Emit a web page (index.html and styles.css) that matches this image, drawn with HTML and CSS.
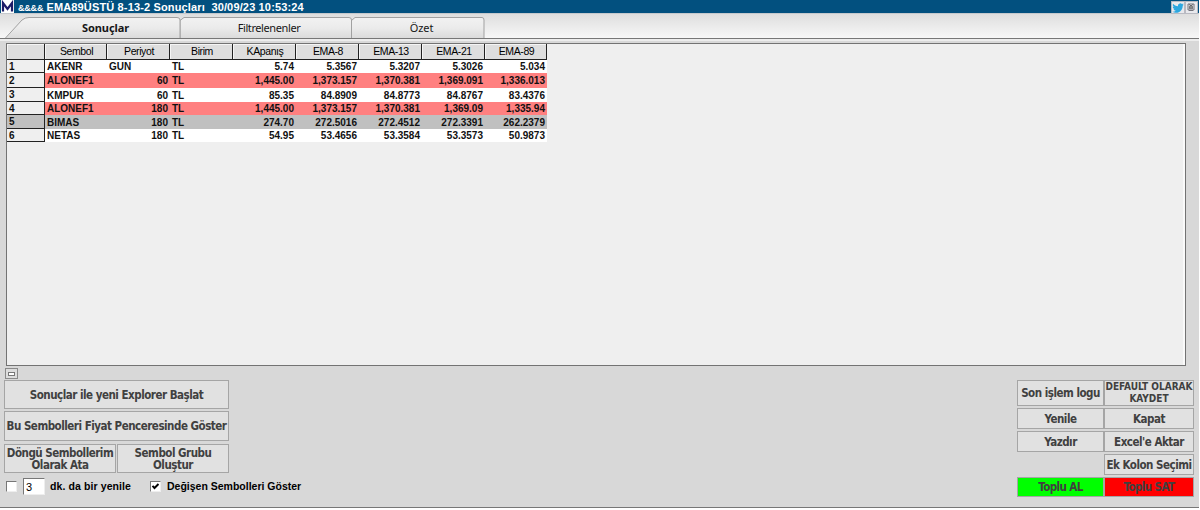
FILE: index.html
```
<!DOCTYPE html>
<html lang="tr">
<head>
<meta charset="utf-8">
<title>Sonuçlar</title>
<link rel="stylesheet" href="styles.css">
</head>
<body>
<div class="window">
  <header class="titlebar">
    <svg class="logo" viewBox="0 0 13 13"><rect width="13" height="13" fill="#fff"/><path d="M2 11.500V3L6.500 9L11 3V11.500" fill="none" stroke="#1c1b68" stroke-width="2.200"/></svg>
    <span class="title"><span class="amps">&amp;&amp;&amp;&amp;</span> EMA89ÜSTÜ 8-13-2 Sonuçları&nbsp; 30/09/23 10:53:24</span>
    <span class="winbtn bird"><svg viewBox="0 0 24 24"><path fill="#2ca7df" d="M23.6 4.900c-.8.4-1.700.6-2.700.8 1-.6 1.700-1.500 2-2.600-.9.5-1.900.9-3 1.100a4.700 4.700 0 0 0-8 4.300C8 8.300 4.500 6.400 2.200 3.600c-1.300 2.200-.7 4.900 1.400 6.300-.8 0-1.500-.2-2.100-.6 0 2.300 1.600 4.300 3.800 4.700-.7.200-1.400.2-2.100.1.600 1.900 2.300 3.200 4.400 3.300A9.500 9.500 0 0 1 .6 19.400c2.200 1.400 4.700 2.100 7.300 2.100 8.800 0 13.800-7.400 13.500-14.200.9-.6 1.700-1.500 2.200-2.400z"/></svg></span>
    <span class="winbtn close"><svg viewBox="0 0 10 10"><path d="M2 2H8V8H2ZM3 8.500H7M3 2L7 7M7 2L3 7" fill="none" stroke="#74747c" stroke-width="1"/><circle cx="5" cy="5" r="1.300" fill="#eee" stroke="#444"/></svg></span>
  </header>
  <nav class="tabs">
    <svg class="tabshapes" viewBox="0 0 490 24">
      <defs><linearGradient id="tab" x1="0" y1="0" x2="0" y2="1"><stop offset="0" stop-color="#f2f2f2"/><stop offset=".5" stop-color="#ebebeb"/><stop offset="1" stop-color="#dadada"/></linearGradient></defs>
      <path d="M351.500 24.500V6.500L355 3.500H482Q484 3.500 484 6V24.500Z"/>
      <path d="M180 24.500V6.500L184 3.500H349Q351.500 3.500 351.500 6V24.500Z"/>
      <path d="M5 24.500L22 6Q25 3.500 29 3.500H177Q180 3.500 180 6V24.500Z"/>
    </svg>
    <span class="tab t1">Sonuçlar</span><span class="tab t2">Filtrelenenler</span><span class="tab t3">Özet</span>
  </nav>
  <main class="grid">
    <div class="sheet">
    <table>
      <colgroup><col class="c0"><col class="c1"><col class="c2"><col class="c3"><col class="c4"><col class="c5"><col class="c6"><col class="c7"><col class="c8"></colgroup>
      <thead><tr><th></th><th>Sembol</th><th>Periyot</th><th>Birim</th><th>KApanış</th><th>EMA-8</th><th>EMA-13</th><th>EMA-21</th><th>EMA-89</th></tr></thead>
      <tbody>
        <tr class="r13"><th>1</th><td class="l">AKENR</td><td class="l">GUN</td><td class="l">TL</td><td>5.74</td><td>5.3567</td><td>5.3207</td><td>5.3026</td><td>5.034</td></tr>
        <tr class="red r15"><th>2</th><td class="l">ALONEF1</td><td>60</td><td class="l">TL</td><td>1,445.00</td><td>1,373.157</td><td>1,370.381</td><td>1,369.091</td><td>1,336.013</td></tr>
        <tr class="r14"><th>3</th><td class="l">KMPUR</td><td>60</td><td class="l">TL</td><td>85.35</td><td>84.8909</td><td>84.8773</td><td>84.8767</td><td>83.4376</td></tr>
        <tr class="red r13"><th>4</th><td class="l">ALONEF1</td><td>180</td><td class="l">TL</td><td>1,445.00</td><td>1,373.157</td><td>1,370.381</td><td>1,369.09</td><td>1,335.94</td></tr>
        <tr class="gray r14"><th>5</th><td class="l">BIMAS</td><td>180</td><td class="l">TL</td><td>274.70</td><td>272.5016</td><td>272.4512</td><td>272.3391</td><td>262.2379</td></tr>
        <tr class="r13"><th>6</th><td class="l">NETAS</td><td>180</td><td class="l">TL</td><td>54.95</td><td>53.4656</td><td>53.3584</td><td>53.3573</td><td>50.9873</td></tr>
      </tbody>
    </table>
    </div>
  </main>
  <footer class="footer">
    <section class="left">
      <span class="mini"><i></i></span>
      <button class="b1">Sonuçlar ile yeni Explorer Başlat</button>
      <button class="b2">Bu Sembolleri Fiyat Penceresinde Göster</button>
      <div class="pair"><button class="b3">Döngü Sembollerim<br>Olarak Ata</button><button class="b4">Sembol Grubu<br>Oluştur</button></div>
      <div class="options">
        <span class="check"></span><span class="field">3</span><span class="lab lab1">dk. da bir yenile</span>
        <span class="check"><svg viewBox="0 0 9 9"><path d="M1.500 3.800L3.500 6L7.500 2" fill="none" stroke="#000" stroke-width="1.900"/></svg></span><span class="lab lab2">Değişen Sembolleri Göster</span>
      </div>
    </section>
    <section class="right">
      <button>Son işlem logu</button><button class="small">DEFAULT OLARAK<br>KAYDET</button>
      <button>Yenile</button><button>Kapat</button>
      <button>Yazdır</button><button>Excel'e Aktar</button>
      <button class="ek">Ek Kolon Seçimi</button>
      <button class="buy">Toplu AL</button><button class="sell">Toplu SAT</button>
    </section>
  </footer>
</div>
</body>
</html>
```
FILE: styles.css
```
* { box-sizing: border-box; }
body { margin: 0; background: #fff; width: 1200px; height: 510px; overflow: hidden; font-family: "Liberation Sans", Arial, sans-serif; }
.window { width: 1199px; height: 508px; background: #d8d8d8; border-bottom: 1px solid #777; display: flex; flex-direction: column; }
svg { display: block; }

.titlebar { height: 14px; flex: none; background: #02507f; border-bottom: 1px solid #c5c9cd; display: flex; color: #fff; }
.logo { width: 13px; height: 13px; margin-left: 1px; flex: none; }
.title { margin-left: 4px; font-size: 11px; line-height: 14px; font-weight: bold; letter-spacing: .15px; flex: 1; white-space: nowrap; }
.amps { font-size: 9px; letter-spacing: -.2px; }
.winbtn { height: 13px; margin-top: 1px; background: #e9e9ed; border: 1px solid #b9bac2; }
.bird { width: 14px; }
.bird svg { width: 12px; height: 12px; }
.close { width: 13px; margin-right: 1px; }
.close svg { width: 10px; height: 10px; }

.tabs { height: 24px; flex: none; display: flex; background: linear-gradient(#dedede, #f7f7f7); font-family: "Noto Sans", sans-serif; font-size: 11px; color: #161616; position: relative; }
.tabshapes { position: absolute; left: 0; top: 0; width: 490px; height: 24px; }
.tabshapes path { fill: url(#tab); stroke: #a1a1a1; stroke-width: 1; }
.tab { position: relative; text-align: center; line-height: 28px; letter-spacing: -.4px; }
.t1 { width: 180px; padding-left: 31px; font-weight: bold; letter-spacing: -.1px; }
.t2 { width: 171px; padding-left: 7px; }
.t3 { width: 133px; padding-left: 8px; letter-spacing: -.1px; }

.grid { height: 328px; flex: none; border-top: 1px solid #777; padding: 4px 13px 0 6px; background: linear-gradient(#ededed 0 2px, #d8d8d8 2px); }
.sheet { height: 323px; background: #efefef; border: 1px solid #737373; box-shadow: inset -2px 0 #fafafa; }
table { border-collapse: separate; border-spacing: 0; table-layout: fixed; width: 540px; }
.c0 { width: 38px; } .c1 { width: 62px; } .c2 { width: 63px; } .c3 { width: 63px; } .c4 { width: 63px; }
.c5 { width: 63px; } .c6 { width: 63px; } .c7 { width: 63px; } .c8 { width: 62px; }
th, td { padding: 0; white-space: nowrap; overflow: hidden; }
thead th { height: 16px; background: #dedede; border-right: 1px solid #222; border-bottom: 1px solid #222; font-size: 10.500px; line-height: 15px; font-weight: normal; letter-spacing: -.4px; padding-left: 2px; box-shadow: inset 1px 1px #f5f5f5; }
tbody th { background: #efefef; text-align: left; padding-left: 2px; border-right: 1px solid #222; border-bottom: 1px solid #222; }
tbody th, td { font-size: 10px; font-weight: bold; color: #111; line-height: 11px; }
td { background: #fff; text-align: right; padding-right: 2px; }
td.l { text-align: left; padding-left: 2px; }
.r13 { height: 13px; } .r14 { height: 14px; } .r15 { height: 15px; }
.red td { background: #ff8080; }
.gray td, .gray th { background: #c0c0c0; }

.footer { flex: 1; display: flex; justify-content: space-between; padding: 2px 5px 0 4px; }
button { margin: 0; padding: 0; border: 1px solid #a5a5a5; border-radius: 0; background: #e1e1e1; color: #404040; font: bold 11.500px/12px "DejaVu Sans Condensed", "DejaVu Sans", sans-serif; font-stretch: condensed; letter-spacing: -.49px; white-space: nowrap; }
.left { width: 310px; display: flex; flex-direction: column; align-items: flex-start; }
.mini { width: 13px; height: 11px; margin-left: 1px; border: 1px solid #8a8a8a; display: flex; align-items: center; justify-content: center; background: #ddd; }
.mini i { width: 7px; height: 4px; border: 1px solid #777; background: #fff; }
.b1 { width: 225px; height: 29px; margin-top: 1px; }
.b2 { width: 225px; height: 30px; margin-top: 2px; }
.pair { display: flex; gap: 1px; margin-top: 3px; }
.b3, .b4 { width: 112px; height: 29px; }
.options { display: flex; align-items: center; height: 18px; margin-top: 4px; margin-left: 2px; }
.check { width: 11px; height: 11px; background: #fff; border: 1px solid #777; border-right-color: #eee; border-bottom-color: #eee; }
.check svg { width: 9px; height: 9px; }
.field { width: 22px; height: 17px; margin-left: 6px; background: #fff; border: 1px solid #777; border-right-color: #eee; border-bottom-color: #eee; font-size: 11px; line-height: 16px; padding-left: 2px; }
.lab { font-size: 10.500px; font-weight: bold; color: #000; white-space: nowrap; }
.lab1 { width: 100px; margin-left: 5px; letter-spacing: .1px; }
.lab2 { margin-left: 6px; }
.right { display: grid; grid-template-columns: 87px 90px; grid-template-rows: 26px 21px 21px 21px 20px; row-gap: 2px; padding-top: 12px; align-content: start; }
.right .small { font-size: 10px; letter-spacing: 0; }
.ek { grid-column: 2; }
.right .buy, .right .sell { letter-spacing: -.6px; }
.buy { background: #0f0; } .sell { background: #f00; }
```
